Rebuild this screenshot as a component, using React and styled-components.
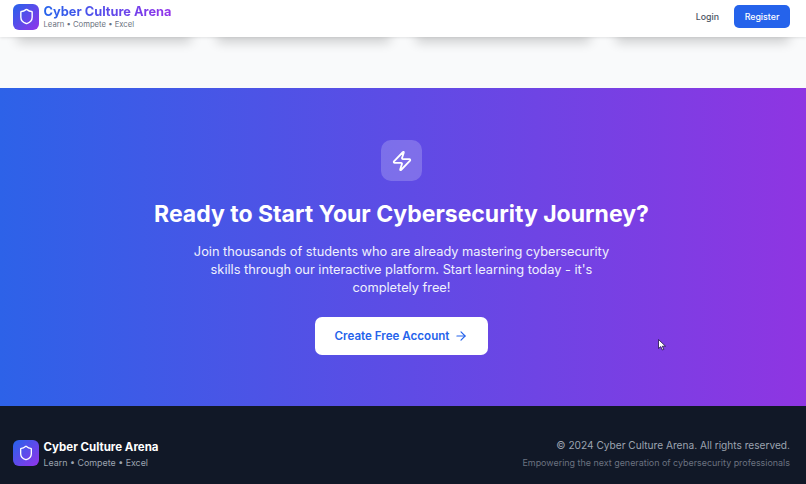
import styled, { createGlobalStyle } from "styled-components";
import { ArrowRight, Shield, Zap } from "lucide-react";

const GlobalStyle = createGlobalStyle`
  html,
  body {
    margin: 0;
    padding: 0;
    overflow: hidden;
  }

  body {
    font-family: Inter, "Liberation Sans", sans-serif;
    background: #f9fafb;
  }

  * {
    box-sizing: border-box;
  }
`;

const Page = styled.div`
  width: 806px;
  height: 484px;
  display: flex;
  flex-direction: column;
  overflow: hidden;
`;

const Header = styled.header`
  height: 37px;
  flex: none;
  position: relative;
  z-index: 2;
  background: #fff;
  padding: 0 16px 4px 13px;
  display: flex;
  align-items: center;
  justify-content: space-between;
  box-shadow: 0 1px 3px rgba(0, 0, 0, 0.1);
`;

const Brand = styled.div`
  display: flex;
  align-items: center;
  gap: 4.5px;
`;

const LogoMark = styled.div`
  width: 26px;
  height: 26px;
  border-radius: 6px;
  background: linear-gradient(135deg, #2563eb, #9333ea);
  color: #fff;
  display: flex;
  align-items: center;
  justify-content: center;
`;

const BrandText = styled.div`
  display: flex;
  flex-direction: column;
  padding-top: ${(p) => (p.$light ? "3px" : "0")};
`;

const BrandName = styled.div`
  font-size: ${(p) => (p.$light ? "11.5px" : "12.8px")};
  line-height: 16px;
  font-weight: 700;
  white-space: nowrap;
  ${(p) =>
    p.$light
      ? "color: #fff;"
      : `background: linear-gradient(90deg, #2563eb, #9333ea);
  -webkit-background-clip: text;
  background-clip: text;
  color: transparent;`}
`;

const Tagline = styled.div`
  font-size: ${(p) => (p.$light ? "8.9px" : "7.7px")};
  line-height: ${(p) => (p.$light ? "14px" : "9px")};
  margin-top: ${(p) => (p.$light ? "1px" : "0")};
  color: ${(p) => (p.$light ? "#9ca3af" : "#6b7280")};
  white-space: nowrap;
`;

const Nav = styled.nav`
  display: flex;
  align-items: center;
  gap: 15px;
`;

const LoginLink = styled.a`
  font-size: 8.8px;
  font-weight: 500;
  color: #4b5563;
`;

const RegisterButton = styled.button`
  width: 56px;
  height: 23px;
  border: none;
  border-radius: 5px;
  background: #2563eb;
  color: #fff;
  font: 500 8.8px Inter, "Liberation Sans", sans-serif;
`;

const Features = styled.section`
  height: 51px;
  flex: none;
  background: #f9fafb;
  padding: 0 16px;
  overflow: hidden;
`;

const CardRow = styled.div`
  display: grid;
  grid-template-columns: repeat(4, 1fr);
  gap: 24px;
`;

const Card = styled.div`
  height: 0;
  margin: 0 6px;
  box-shadow: 0 0 12px 5px rgba(0, 0, 0, 0.2);
`;

const Cta = styled.section`
  height: 318px;
  flex: none;
  background: linear-gradient(90deg, #2d62e8, #8f35e2);
  display: flex;
  flex-direction: column;
  align-items: center;
  padding: 52px 3px 0 0;
`;

const CtaIcon = styled.div`
  width: 41px;
  height: 41px;
  border-radius: 10px;
  background: rgba(255, 255, 255, 0.2);
  color: #fff;
  display: flex;
  align-items: center;
  justify-content: center;
`;

const CtaTitle = styled.h2`
  margin: 17px 0 0;
  font-size: 23px;
  line-height: 32px;
  font-weight: 700;
  color: #fff;
`;

const CtaText = styled.p`
  margin: 13px 0 0;
  width: 430px;
  font-size: 12.8px;
  line-height: 18px;
  text-align: center;
  color: #eff1fd;
`;

const CtaButton = styled.button`
  margin-top: 19.5px;
  width: 173px;
  height: 38px;
  border: none;
  border-radius: 7px;
  background: #fff;
  color: #2563eb;
  font: 600 11.6px Inter, "Liberation Sans", sans-serif;
  display: flex;
  align-items: center;
  justify-content: center;
  gap: 5px;
`;

const Cursor = styled.svg`
  position: absolute;
  left: 658px;
  top: 339px;
`;

const Footer = styled.footer`
  height: 78px;
  flex: none;
  background: #111827;
  padding: 16px 16px 0 13px;
  display: flex;
  align-items: center;
  justify-content: space-between;
`;

const FooterMeta = styled.div`
  text-align: right;
`;

const Copyright = styled.div`
  font-size: 10.15px;
  line-height: 16px;
  color: #9ca3af;
`;

const Motto = styled.div`
  margin-top: 3px;
  font-size: 8.93px;
  line-height: 14px;
  color: #6b7280;
`;

export default function App() {
  return (
    <Page>
      <GlobalStyle />
      <Header>
        <Brand>
          <LogoMark>
            <Shield size={17} strokeWidth={2} />
          </LogoMark>
          <BrandText>
            <BrandName>Cyber Culture Arena</BrandName>
            <Tagline>Learn • Compete • Excel</Tagline>
          </BrandText>
        </Brand>
        <Nav>
          <LoginLink>Login</LoginLink>
          <RegisterButton>Register</RegisterButton>
        </Nav>
      </Header>
      <Features>
        <CardRow>
          <Card />
          <Card />
          <Card />
          <Card />
        </CardRow>
      </Features>
      <Cta>
        <CtaIcon>
          <Zap size={22} strokeWidth={2} />
        </CtaIcon>
        <CtaTitle>Ready to Start Your Cybersecurity Journey?</CtaTitle>
        <CtaText>
          Join thousands of students who are already mastering cybersecurity
          skills through our interactive platform. Start learning today - it's
          completely free!
        </CtaText>
        <CtaButton>
          Create Free Account
          <ArrowRight size={14} strokeWidth={2} />
        </CtaButton>
      </Cta>
      <Footer>
        <Brand>
          <LogoMark>
            <Shield size={16} strokeWidth={2} />
          </LogoMark>
          <BrandText $light>
            <BrandName $light>Cyber Culture Arena</BrandName>
            <Tagline $light>Learn • Compete • Excel</Tagline>
          </BrandText>
        </Brand>
        <FooterMeta>
          <Copyright>© 2024 Cyber Culture Arena. All rights reserved.</Copyright>
          <Motto>Empowering the next generation of cybersecurity professionals</Motto>
        </FooterMeta>
      </Footer>
      <Cursor width="9" height="12" viewBox="0 0 9 12">
        <path d="M0.5 0.5 L0.5 9.5 L2.8 7.6 L4.4 11 L5.8 10.4 L4.3 7.2 L7.5 7.2 Z" fill="#fff" stroke="#1f1147" strokeWidth="0.8" />
      </Cursor>
    </Page>
  );
}
